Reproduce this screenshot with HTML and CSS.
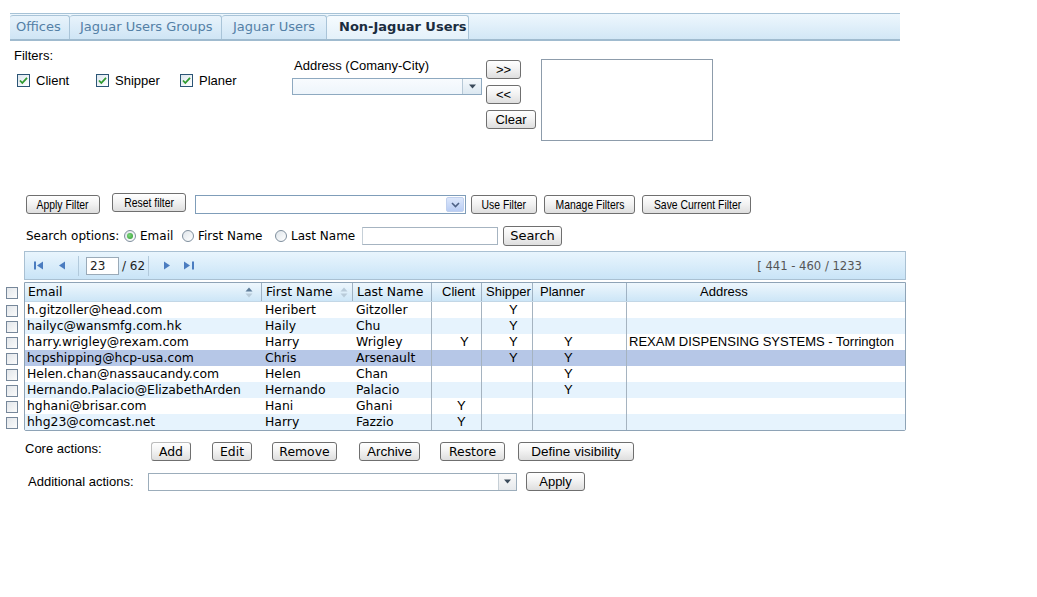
FILE: index.html
```html
<!DOCTYPE html>
<html>
<head>
<meta charset="utf-8">
<link rel="stylesheet" href="styles.css">
</head>
<body>
<div class="page">
  <div class="tabs">
    <div class="tab t1">Offices</div>
    <div class="tab t2">Jaguar Users Groups</div>
    <div class="tab t3">Jaguar Users</div>
    <div class="tab t4 active">Non-Jaguar Users</div>
  </div>

  <div class="filter-panel">
    <div class="filters-left">
      <div class="lbl">Filters:</div>
      <div class="checks">
        <label class="chk c1"><span class="cbx"><svg viewBox="0 0 13 13" width="13" height="13"><path d="M3 6.5 L5.3 9 L10 3.8" fill="none" stroke="#2f9a2f" stroke-width="1.8"/></svg></span>Client</label>
        <label class="chk c2"><span class="cbx"><svg viewBox="0 0 13 13" width="13" height="13"><path d="M3 6.5 L5.3 9 L10 3.8" fill="none" stroke="#2f9a2f" stroke-width="1.8"/></svg></span>Shipper</label>
        <label class="chk c3"><span class="cbx"><svg viewBox="0 0 13 13" width="13" height="13"><path d="M3 6.5 L5.3 9 L10 3.8" fill="none" stroke="#2f9a2f" stroke-width="1.8"/></svg></span>Planer</label>
      </div>
    </div>
    <div class="addr">
      <div class="lbl">Address (Comany-City)</div>
      <div class="combo combo-addr"><span class="combo-field"></span><span class="combo-btn"><svg viewBox="0 0 9 5" width="9" height="5"><path d="M1 0.5 H8 L4.5 4.5 Z" fill="#3a4a5a"/></svg></span></div>
    </div>
    <div class="move-btns">
      <button class="btn b-move">&gt;&gt;</button>
      <button class="btn b-move">&lt;&lt;</button>
      <button class="btn b-clear">Clear</button>
    </div>
    <div class="listbox"></div>
  </div>

  <div class="filter-row">
    <button class="btn nb b-apply"><span class="nt">Apply Filter</span></button>
    <button class="btn nb b-reset"><span class="nt">Reset filter</span></button>
    <div class="combo combo-filter"><span class="combo-field"></span><span class="combo-btn xp"><svg viewBox="0 0 9 6" width="9" height="6"><path d="M1 1 L4.5 4.5 L8 1" fill="none" stroke="#4d6185" stroke-width="1.6"/></svg></span></div>
    <button class="btn nb b-use"><span class="nt">Use Filter</span></button>
    <button class="btn nb b-manage"><span class="nt">Manage Filters</span></button>
    <button class="btn nb b-save"><span class="nt">Save Current Filter</span></button>
  </div>

  <div class="search-row">
    <span class="s-lbl">Search options:</span>
    <label class="rad r1"><span class="rdo on"></span>Email</label>
    <label class="rad r2"><span class="rdo"></span>First Name</label>
    <label class="rad r3"><span class="rdo"></span>Last Name</label>
    <span class="s-input"></span>
    <button class="btn b-search">Search</button>
  </div>

  <div class="pager">
    <svg class="pg-first" viewBox="0 0 10 9" width="10" height="9"><rect x="0" y="0.5" width="2" height="8" fill="#4a7cc0"/><path d="M9 0.5 V8.5 L3 4.5 Z" fill="#4a7cc0"/></svg>
    <svg class="pg-prev" viewBox="0 0 7 9" width="7" height="9"><path d="M7 0.5 V8.5 L1 4.5 Z" fill="#4a7cc0"/></svg>
    <span class="pg-sep"></span>
    <span class="pg-input">23</span>
    <span class="pg-total">/ 62</span>
    <span class="pg-sep s2"></span>
    <svg class="pg-next" viewBox="0 0 7 9" width="7" height="9"><path d="M0 0.5 V8.5 L6 4.5 Z" fill="#4a7cc0"/></svg>
    <svg class="pg-last" viewBox="0 0 10 9" width="10" height="9"><path d="M0 0.5 V8.5 L6 4.5 Z" fill="#4a7cc0"/><rect x="8" y="0.5" width="2" height="8" fill="#4a7cc0"/></svg>
    <span class="pg-info">[ 441 - 460 / 1233</span>
  </div>

  <div class="grid-area">
    <div class="cbcol">
      <span class="rcb hcb"></span>
      <span class="rcb"></span>
      <span class="rcb"></span>
      <span class="rcb"></span>
      <span class="rcb"></span>
      <span class="rcb"></span>
      <span class="rcb"></span>
      <span class="rcb"></span>
      <span class="rcb"></span>
    </div>
    <div class="grid">
      <div class="row head">
        <div class="c h-email">Email<svg class="sort" viewBox="0 0 8 11" width="8" height="11"><path d="M0.5 4.5 L4 0.5 L7.5 4.5 Z" fill="#5f7d99"/><path d="M0.5 6.5 L4 10.5 L7.5 6.5 Z" fill="#b9cbd9"/></svg></div>
        <div class="c h-first">First Name<svg class="sort" viewBox="0 0 8 11" width="8" height="11"><path d="M0.5 4.5 L4 0.5 L7.5 4.5 Z" fill="#b9cbd9"/><path d="M0.5 6.5 L4 10.5 L7.5 6.5 Z" fill="#b9cbd9"/></svg></div>
        <div class="c h-last">Last Name</div>
        <div class="c h-client">Client</div>
        <div class="c h-ship">Shipper</div>
        <div class="c h-plan">Planner</div>
        <div class="c h-addr">Address</div>
      </div>
      <div class="row">
        <div class="c email">h.gitzoller@head.com</div><div class="c first">Heribert</div><div class="c last">Gitzoller</div><div class="c client"></div><div class="c ship">Y</div><div class="c plan"></div><div class="c addr-c"></div>
      </div>
      <div class="row alt">
        <div class="c email">hailyc@wansmfg.com.hk</div><div class="c first">Haily</div><div class="c last">Chu</div><div class="c client"></div><div class="c ship">Y</div><div class="c plan"></div><div class="c addr-c"></div>
      </div>
      <div class="row">
        <div class="c email">harry.wrigley@rexam.com</div><div class="c first">Harry</div><div class="c last">Wrigley</div><div class="c client">Y</div><div class="c ship">Y</div><div class="c plan">Y</div><div class="c addr-c">REXAM DISPENSING SYSTEMS - Torrington</div>
      </div>
      <div class="row sel">
        <div class="c email">hcpshipping@hcp-usa.com</div><div class="c first">Chris</div><div class="c last">Arsenault</div><div class="c client"></div><div class="c ship">Y</div><div class="c plan">Y</div><div class="c addr-c"></div>
      </div>
      <div class="row">
        <div class="c email">Helen.chan@nassaucandy.com</div><div class="c first">Helen</div><div class="c last">Chan</div><div class="c client"></div><div class="c ship"></div><div class="c plan">Y</div><div class="c addr-c"></div>
      </div>
      <div class="row alt">
        <div class="c email">Hernando.Palacio@ElizabethArden</div><div class="c first">Hernando</div><div class="c last">Palacio</div><div class="c client"></div><div class="c ship"></div><div class="c plan">Y</div><div class="c addr-c"></div>
      </div>
      <div class="row">
        <div class="c email">hghani@brisar.com</div><div class="c first">Hani</div><div class="c last">Ghani</div><div class="c client c2y">Y</div><div class="c ship"></div><div class="c plan"></div><div class="c addr-c"></div>
      </div>
      <div class="row alt">
        <div class="c email">hhg23@comcast.net</div><div class="c first">Harry</div><div class="c last">Fazzio</div><div class="c client c2y">Y</div><div class="c ship"></div><div class="c plan"></div><div class="c addr-c"></div>
      </div>
    </div>
  </div>

  <div class="core-row">
    <span class="core-lbl">Core actions:</span>
    <button class="btn vb b-add">Add</button>
    <button class="btn vb b-edit">Edit</button>
    <button class="btn vb b-remove">Remove</button>
    <button class="btn b-archive">Archive</button>
    <button class="btn vb b-restore">Restore</button>
    <button class="btn b-define">Define visibility</button>
  </div>

  <div class="add-row">
    <span class="add-lbl">Additional actions:</span>
    <div class="combo combo-add"><span class="combo-field"></span><span class="combo-btn gray"><svg viewBox="0 0 9 5" width="9" height="5"><path d="M1 0.5 H8 L4.5 4.5 Z" fill="#3a4a5a"/></svg></span></div>
    <button class="btn b-applyact">Apply</button>
  </div>
</div>
</body>
</html>
```

FILE: styles.css
```css
* { box-sizing: border-box; }
body {
  margin: 0;
  background: #fff;
  color: #000;
  font-family: "Liberation Sans", Arial, sans-serif;
  font-size: 13px;
}
.page { padding-top: 13px; }

/* tabs */
.tabs {
  display: flex;
  align-items: flex-end;
  margin-left: 10px;
  width: 890px;
  height: 28px;
  border-top: 1px solid #a6c2d6;
  border-bottom: 2px solid #a0bbcf;
  background: linear-gradient(#eef7fd, #d2e7f6);
}
.tab {
  height: 24px;
  line-height: 22px;
  font-family: "DejaVu Sans", Verdana, sans-serif;
  font-size: 13px;
  color: #5480a6;
  border: 1px solid #a9c4d8;
  border-bottom: 0;
  border-left: 0;
  border-radius: 3px 3px 0 0;
  background: linear-gradient(#e8f3fb, #cfe5f5);
  white-space: nowrap;
}
.t1 { width: 60px; padding-left: 6px; }
.t2 { width: 152px; padding-left: 10px; }
.t3 { width: 105px; padding-left: 11px; }
.t4 { width: 142px; padding-left: 12px; }
.tab.active {
  font-weight: bold;
  color: #1b2d3f;
  background: linear-gradient(#f6fbfe, #e4f1fa);
}

/* filter panel */
.filter-panel {
  display: flex;
  align-items: flex-start;
  padding-left: 14px;
  height: 153px;
}
.lbl { line-height: 15px; white-space: nowrap; }
.filters-left { width: 278px; padding-top: 7px; }
.checks { display: flex; margin-top: 10px; padding-left: 3px; }
.chk { display: flex; align-items: center; line-height: 15px; }
.c1 { width: 79px; }
.c2 { width: 84px; }
.cbx {
  width: 13px; height: 13px;
  border: 1px solid #2b5576;
  background: linear-gradient(135deg, #dde6ee, #fff);
  margin-right: 6px;
  display: inline-flex;
}
.cbx svg { margin: -1px; }
.addr { width: 190px; padding-top: 17px; }
.addr .lbl { padding-left: 2px; }

.combo {
  display: flex;
  border: 1px solid #8ea9c0;
  background: #fff;
}
.combo-field { flex: 1; }
.combo-btn {
  display: flex; align-items: center; justify-content: center;
  border-left: 1px solid #b6c8d6;
  background: linear-gradient(#f5f9fc, #dce8f1);
}
.combo-addr { margin-top: 5px; height: 17px; }
.combo-addr .combo-field { background: linear-gradient(#f8fbfe, #eef5fb); }
.combo-addr .combo-btn { width: 19px; }

.move-btns {
  display: flex; flex-direction: column; align-items: flex-start;
  gap: 6px;
  margin-left: 4px; padding-top: 19px;
}
.btn {
  font-family: "Liberation Sans", Arial, sans-serif;
  font-size: 13px;
  color: #000;
  height: 19px;
  padding: 0;
  border: 1px solid #6f6f6f;
  border-radius: 3px;
  background: linear-gradient(#ffffff, #f3f3f3 45%, #dedede);
  line-height: 17px;
  text-align: center;
  white-space: nowrap;
  overflow: visible;
}
.b-move { width: 35px; }
.b-clear { width: 50px; }
.listbox {
  margin-left: 5px; margin-top: 18px;
  width: 172px; height: 82px;
  border: 1px solid #8d9cab;
  background: #fff;
}

/* filter row */
.filter-row {
  display: flex;
  align-items: flex-start;
  padding-left: 26px;
  height: 21px;
  padding-top: 1px;
}
.nb { font-size: 13px; }
.nt { display: inline-block; transform: scaleX(0.8); }
.b-apply { width: 74px; }
.b-reset { width: 74px; margin-left: 12px; margin-top: -2px; }
.combo-filter { width: 271px; height: 19px; margin-left: 9px; border-color: #7f9db9; }
.combo-btn.xp {
  width: 18px; margin: 1px; border: 1px solid #c0d0ee; border-radius: 2px;
  background: linear-gradient(#dce7fb, #b9cdf4);
}
.b-use { width: 66px; margin-left: 5px; }
.b-manage { width: 91px; margin-left: 7px; }
.b-save { width: 109px; margin-left: 7px; }

/* search row */
.search-row {
  display: flex;
  align-items: center;
  padding-left: 26px;
  margin-top: 10px;
  height: 21px;
  font-family: "DejaVu Sans", Verdana, sans-serif;
  font-size: 12px;
}
.s-lbl { width: 98px; white-space: nowrap; }
.rad { display: flex; align-items: center; white-space: nowrap; }
.r1 { width: 58px; }
.r2 { width: 93px; }
.r3 { width: 87px; }
.rdo {
  width: 12px; height: 12px; border-radius: 50%;
  border: 1px solid #7e8e9d;
  background: linear-gradient(135deg, #dfe5ea, #fff);
  margin-right: 4px;
  display: inline-flex; align-items: center; justify-content: center;
}
.rdo.on::after {
  content: ""; width: 6px; height: 6px; border-radius: 50%;
  background: radial-gradient(circle at 40% 40%, #7fd67f, #2b9a2b);
}
.s-input {
  width: 136px; height: 18px;
  border: 1px solid #a6b4c1;
  border-left-color: #c6d0d8;
  background: #fff;
}
.b-search {
  font-family: "DejaVu Sans", Verdana, sans-serif;
  width: 59px; height: 20px; margin-left: 5px;
  font-size: 13px; line-height: 18px;
}

/* pager */
.pager {
  display: flex;
  align-items: center;
  margin-left: 24px;
  margin-top: 5px;
  width: 882px;
  height: 29px;
  border: 1px solid #a9c0d2;
  background: linear-gradient(#e9f5fd, #c9e4f7);
  padding-left: 9px;
  font-family: "DejaVu Sans", Verdana, sans-serif;
  font-size: 12px;
  color: #222;
}
.pg-prev { margin-left: 14px; }
.pg-sep { width: 1px; height: 20px; background: #b2cadc; margin-left: 13px; }
.pg-input {
  width: 33px; height: 18px; margin-left: 7px;
  border: 1px solid #9aaab8;
  background: #fff;
  padding-left: 3px; line-height: 16px;
}
.pg-total { margin-left: 3px; width: 25px; }
.pg-sep.s2 { margin-left: 1px; }
.pg-next { margin-left: 15px; }
.pg-last { margin-left: 13px; }
.pg-info { margin-left: auto; margin-right: 43px; color: #555; font-size: 11.6px; }

/* grid */
.grid-area { display: flex; align-items: flex-start; margin-top: 2px; }
.cbcol { width: 24px; padding-top: 5px; display: flex; flex-direction: column; }
.rcb {
  width: 12px; height: 12px; margin-left: 6px;
  border: 1px solid #76879a;
  background: linear-gradient(135deg, #e2e6ea, #fbfbfb);
  margin-bottom: 4px;
}
.rcb:last-child { margin-bottom: 0; }
.hcb { margin-bottom: 6px; }
.grid {
  width: 882px;
  border: 1px solid #8ea3b6;
  border-radius: 0 0 2px 2px;
  font-family: "DejaVu Sans", Verdana, sans-serif;
  font-size: 12.4px;
}
.row {
  display: grid;
  grid-template-columns: 237px 91px 79px 50px 51px 94px 1fr;
  height: 16px;
  line-height: 16px;
  background: #fff;
}
.row.alt { background: #e6f3fd; }
.row.sel { background: #b6c7e7; }
.c { white-space: nowrap; overflow: hidden; }
.row .last, .row .client, .row .ship, .row .plan { border-right: 1px solid #a5b3c0; }
.email { padding-left: 2px; }
.first { padding-left: 3px; }
.last { padding-left: 3px; }
.client, .ship, .plan, .addr-c, .head .h-client, .head .h-ship, .head .h-plan, .head .h-addr {
  font-family: "Liberation Sans", Arial, sans-serif;
  font-size: 13px;
}
.client { padding-left: 28px; }
.client.c2y { padding-left: 25px; }
.ship { padding-left: 27px; }
.plan { padding-left: 31px; }
.addr-c { padding-left: 2px; }

.row.head {
  height: 19px;
  line-height: 18px;
  background: linear-gradient(#eef7fd, #cde6f7);
  border-bottom: 1px solid #c3d7e6;
}
.head .c { border-right: 1px solid #9fb2c3; position: relative; }
.head .h-addr { border-right: 0; }
.h-email { padding-left: 3px; }
.h-first { padding-left: 4px; }
.h-last { padding-left: 4px; }
.h-client { padding-left: 10px; }
.h-ship { padding-left: 4px; }
.h-plan { padding-left: 7px; }
.h-addr { padding-left: 73px; }
.sort { position: absolute; top: 4px; }
.h-email .sort { right: 8px; }
.h-first .sort { right: 4px; }

/* actions */
.core-row {
  display: flex;
  align-items: center;
  margin-top: 11px;
  height: 19px;
  padding-left: 25px;
}
.core-lbl { width: 126px; line-height: 15px; margin-top: -6px; }
.vb {
  font-family: "DejaVu Sans", Verdana, sans-serif;
  font-size: 12.4px;
}
.b-add { width: 40px; border-left-color: #bdbdbd; border-top-color: #bdbdbd; }
.b-edit { width: 40px; margin-left: 21px; }
.b-remove { width: 65px; margin-left: 20px; }
.b-archive { width: 61px; margin-left: 22px; font-size: 13.5px; }
.b-restore { width: 65px; margin-left: 20px; }
.b-define { width: 116px; margin-left: 13px; font-size: 13.5px; }

.add-row {
  display: flex;
  align-items: center;
  margin-top: 11px;
  height: 19px;
  padding-left: 28px;
}
.add-lbl { width: 120px; }
.combo-add { width: 369px; height: 18px; border-color: #9cadbb; }
.combo-btn.gray { width: 18px; border-left: 1px solid #c6cfd6; background: linear-gradient(#fafafa, #e6e9ec); }
.b-applyact { width: 59px; margin-left: 9px; }
```
